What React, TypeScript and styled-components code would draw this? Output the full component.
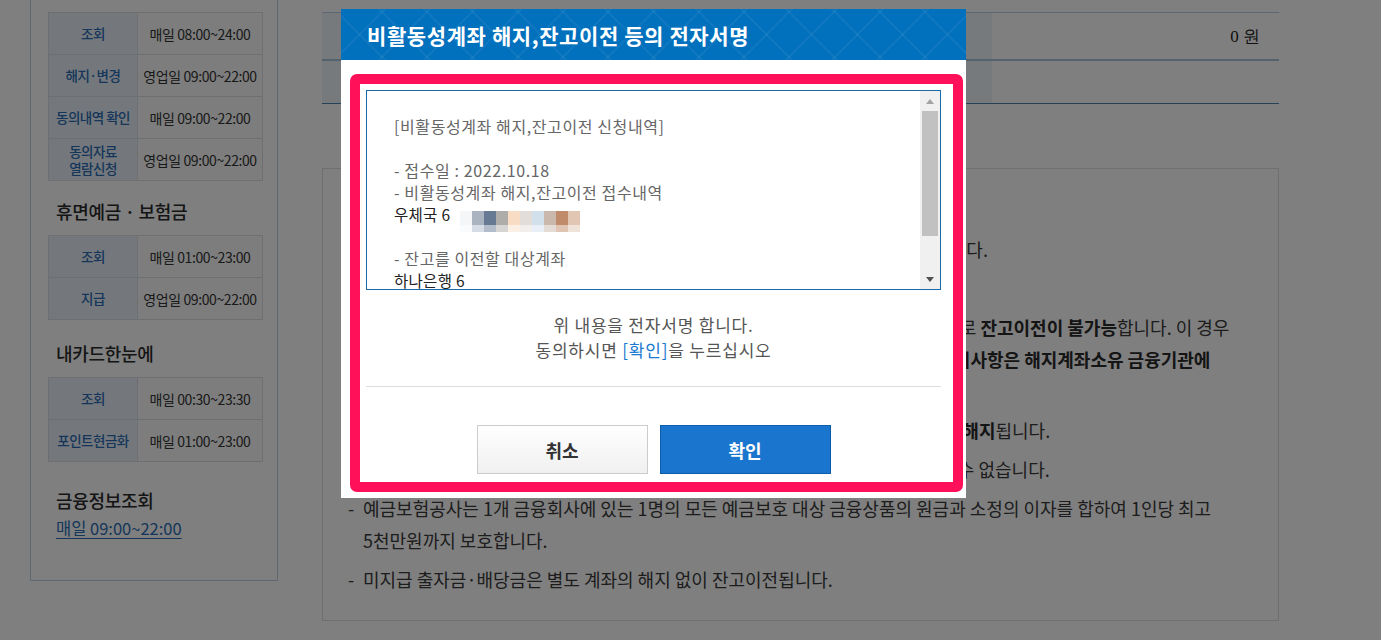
import React from "react";
import styled, { createGlobalStyle } from "styled-components";

const GlobalStyle = createGlobalStyle`
  html, body { margin: 0; padding: 0; background: #fff; }
  body {
    font-family: "Noto Sans CJK KR", "Noto Sans", sans-serif;
    color: #333;
    overflow: hidden;
  }
  * { box-sizing: border-box; }
`;

const Page = styled.div`
  display: flex;
  align-items: flex-start;
  gap: 44px;
  padding-left: 30px;
  width: 1381px;
  height: 640px;
  overflow: hidden;
`;

/* ---------- Sidebar ---------- */
const Sidebar = styled.aside`
  width: 248px;
  flex: none;
  margin-top: -20px;
  padding: 31px 14px 40px 17px;
  border: 1px solid #bfd0e2;
`;

const TimeTable = styled.table`
  width: 215px;
  border-collapse: collapse;
  table-layout: fixed;
`;

const LabelCell = styled.th`
  width: 89px;
  height: 42px;
  padding: 0 1px;
  border: 1px solid #dcdfe3;
  background: #e8f0f8;
  color: #2a6cb4;
  font-size: 13.5px;
  letter-spacing: -0.5px;
  font-weight: 500;
  line-height: 17px;
  text-align: center;
`;

const ValueCell = styled.td`
  height: 42px;
  border: 1px solid #dcdfe3;
  background: #fbfbfb;
  color: #333;
  text-align: center;
  font-size: 14px;
  letter-spacing: -0.4px;
`;

const SideHeading = styled.h3<{ $top?: number; $bottom?: number }>`
  margin: ${(p) => p.$top ?? 18}px 0 ${(p) => p.$bottom ?? 12}px 8px;
  font-size: 18px;
  line-height: 24px;
  font-weight: 500;
  color: #2b2b2b;
  letter-spacing: -0.3px;
`;

const SideLink = styled.a`
  display: block;
  margin: 4px 0 0 8px;
  width: max-content;
  font-size: 16.5px;
  line-height: 24px;
  color: #2a6cb4;
  text-decoration: underline;
  text-underline-offset: 3px;
`;

/* ---------- Content ---------- */
const Content = styled.main`
  width: 957px;
  flex: none;
  padding-top: 12px;
`;

const Summary = styled.div`
  border-top: 1px solid #b9d3ea;
  border-bottom: 1px solid #4a86b0;
`;

const SummaryRow = styled.div<{ $h: number }>`
  display: grid;
  grid-template-columns: 670px 1fr;
  height: ${(p) => p.$h}px;
  & + & { border-top: 2px solid #a9c4de; }
`;

const SummaryLabel = styled.div`
  background: #eef4fa;
`;

const SummaryValue = styled.div`
  display: flex;
  align-items: center;
  justify-content: flex-end;
  padding-right: 19px;
  font-family: "Liberation Serif", "DejaVu Serif", serif;
  font-size: 17px;
  color: #222;
`;

const NoticeBox = styled.section`
  margin-top: 64px;
  height: 453px;
  border: 1px solid #dedede;
  padding: 25px 20px 0 25px;
  display: flex;
  flex-direction: column;
  gap: 7px;
  font-size: 18px;
  line-height: 32px;
  color: #3a3a3a;
`;

const Para = styled.div`
  display: flex;
`;

const Dash = styled.span`
  width: 15px;
  flex: none;
`;

const Lines = styled.div`
  white-space: nowrap;
  & > span { display: block; }
  b { font-weight: 700; color: #2a2a2a; }
`;

/* ---------- Modal ---------- */
const Overlay = styled.div`
  position: fixed;
  inset: 0;
  background: rgba(0, 0, 0, 0.5);
`;

const Modal = styled.div`
  position: fixed;
  left: 341px;
  top: 9px;
  width: 625px;
  background: #fff;
`;

const ModalHeader = styled.div`
  height: 51px;
  display: flex;
  align-items: center;
  padding-left: 26px;
  color: #fff;
  font-size: 21px;
  font-weight: 700;
  letter-spacing: 0.6px;
  background-color: #0170bd;
  background-image:
    repeating-linear-gradient(45deg, transparent 0 30px, rgba(255,255,255,0.05) 30px 32px),
    repeating-linear-gradient(-45deg, transparent 0 30px, rgba(255,255,255,0.05) 30px 32px);
`;

const ModalBody = styled.div`
  padding: 30px 25px 24px;
`;

const Highlight = styled.div`
  position: absolute;
  left: 9px;
  top: 65px;
  width: 613px;
  height: 418px;
  border: 10px solid #ff1058;
  border-radius: 7px;
  pointer-events: none;
`;

const TextArea = styled.div`
  height: 200px;
  border: 1px solid #1a6aaa;
  display: flex;
`;

const TextContent = styled.div`
  flex: 1;
  overflow: hidden;
  padding: 24px 0 0 27px;
  line-height: 22px;
  white-space: nowrap;
`;

const TextLine = styled.div<{ $strong?: boolean }>`
  height: 22px;
  display: flex;
  align-items: center;
  color: ${(p) => (p.$strong ? "#222" : "#666")};
  font-size: ${(p) => (p.$strong ? "15.5px" : "16px")};
  letter-spacing: ${(p) => (p.$strong ? "0.3px" : "0.6px")};
`;

const Masked = styled.span`
  display: inline-grid;
  grid-template-columns: repeat(10, 12px);
  grid-template-rows: 14px 7px;
  margin: 14px 0 0 10px;
`;

const Pixel = styled.span<{ $c: string }>`
  background: ${(p) => p.$c};
`;

const ScrollBar = styled.div`
  width: 20px;
  flex: none;
  background: #f0f0f0;
  display: flex;
  flex-direction: column;
`;

const Arrow = styled.div<{ $down?: boolean }>`
  height: 20px;
  display: flex;
  align-items: center;
  justify-content: center;
  &::before {
    content: "";
    border-left: 4px solid transparent;
    border-right: 4px solid transparent;
    ${(p) =>
      p.$down
        ? "border-top: 5px solid #505050;"
        : "border-bottom: 5px solid #a3a3a3;"}
  }
`;

const Track = styled.div`
  flex: 1;
  padding: 0 2px;
`;

const Thumb = styled.div`
  height: 125px;
  background: #c1c1c1;
`;

const Message = styled.p`
  margin: 22px 0 0;
  text-align: center;
  font-size: 17px;
  line-height: 25px;
  color: #555;
  letter-spacing: 0.8px;
  em { font-style: normal; color: #1a7ad0; }
`;

const Divider = styled.hr`
  margin: 24px 0 0;
  border: 0;
  border-top: 1px solid #dcdcdc;
`;

const Buttons = styled.div`
  margin-top: 38px;
  display: flex;
  justify-content: center;
  gap: 12px;
`;

const Button = styled.button<{ $primary?: boolean }>`
  width: 171px;
  height: 49px;
  font-family: inherit;
  font-size: 18px;
  font-weight: 700;
  cursor: pointer;
  border: 1px solid ${(p) => (p.$primary ? "#0d5ea8" : "#cccccc")};
  color: ${(p) => (p.$primary ? "#fff" : "#333")};
  background: ${(p) =>
    p.$primary ? "#1a75cf" : "linear-gradient(#ffffff, #f0f0f0)"};
`;

const rows1 = [
  ["조회", "매일 08:00~24:00"],
  ["해지·변경", "영업일 09:00~22:00"],
  ["동의내역 확인", "매일 09:00~22:00"],
  ["동의자료\n열람신청", "영업일 09:00~22:00"],
];
const rows2 = [
  ["조회", "매일 01:00~23:00"],
  ["지급", "영업일 09:00~22:00"],
];
const rows3 = [
  ["조회", "매일 00:30~23:30"],
  ["포인트현금화", "매일 01:00~23:00"],
];

const pixelRows = [
  ["#f5f6f8", "#a9b4c0", "#677a93", "#aeadaa", "#f8dcc4", "#e2ddd8", "#d2e0ec", "#c9b8ab", "#c08b6a", "#e0c6b3"],
  ["#fafbfc", "#d6dce5", "#b2bccb", "#d6d5d3", "#fcefe3", "#f1eeeb", "#e8eff6", "#e4dbd4", "#e0c5b4", "#efe2d8"],
];

function Table({ rows }: { rows: string[][] }) {
  return (
    <TimeTable>
      <tbody>
        {rows.map(([l, v]) => (
          <tr key={l}>
            <LabelCell>
              {l.split("\n").map((s, i) => (
                <React.Fragment key={i}>
                  {i > 0 && <br />}
                  {s}
                </React.Fragment>
              ))}
            </LabelCell>
            <ValueCell>{v}</ValueCell>
          </tr>
        ))}
      </tbody>
    </TimeTable>
  );
}

export default function App() {
  return (
    <>
      <GlobalStyle />
      <Page>
        <Sidebar>
          <Table rows={rows1} />
          <SideHeading>휴면예금 · 보험금</SideHeading>
          <Table rows={rows2} />
          <SideHeading $top={21}>내카드한눈에</SideHeading>
          <Table rows={rows3} />
          <SideHeading $top={26} $bottom={0}>금융정보조회</SideHeading>
          <SideLink>매일 09:00~22:00</SideLink>
        </Sidebar>

        <Content>
          <Summary>
            <SummaryRow $h={46}>
              <SummaryLabel />
              <SummaryValue>0 원</SummaryValue>
            </SummaryRow>
            <SummaryRow $h={44}>
              <SummaryLabel />
              <SummaryValue />
            </SummaryRow>
          </Summary>

          <NoticeBox>
            <Para>
              <Dash>-</Dash>
              <Lines><span>비활동성계좌 해지 및 잔고이전 신청은 본인만 가능합니다.</span></Lines>
            </Para>
            <Para>
              <Dash>-</Dash>
              <Lines><span>잔고이전 대상계좌는 본인 명의의 입출금이 자유로운 예금 계좌만 지정할 수 있습니다.</span></Lines>
            </Para>
            <Para>
              <Dash>-</Dash>
              <Lines><span>해지 신청 전 계좌의 잔액과 거래내역을 반드시 확인하시기 바랍니다.</span></Lines>
            </Para>
            <Para>
              <Dash>-</Dash>
              <Lines>
                <span>압류, 질권설정, 지급제한 사유가 있는 계좌는 해지 및 잔고이전 대상에서 제외되므로 <b>잔고이전이 불가능</b>합니다. 이 경우</span>
                <span>계좌 해지 및 잔고이전은 해당 금융기관 영업점을 통하여 처리하셔야 하며 기타 <b>문의사항은 해지계좌소유 금융기관에</b></span>
                <span>문의하시기 바랍니다.</span>
              </Lines>
            </Para>
            <Para>
              <Dash>-</Dash>
              <Lines><span>잔고이전을 신청하신 비활동성계좌는 모두 잔고이전 처리와 동시에 자동으로 일괄 <b>해지</b>됩니다.</span></Lines>
            </Para>
            <Para>
              <Dash>-</Dash>
              <Lines><span>해지된 계좌 및 잔고이전 된 금액은 고객의 요청에 의해서도 다시 원상태로 되돌릴 수 없습니다.</span></Lines>
            </Para>
            <Para>
              <Dash>-</Dash>
              <Lines>
                <span>예금보험공사는 1개 금융회사에 있는 1명의 모든 예금보호 대상 금융상품의 원금과 소정의 이자를 합하여 1인당 최고</span>
                <span>5천만원까지 보호합니다.</span>
              </Lines>
            </Para>
            <Para>
              <Dash>-</Dash>
              <Lines><span>미지급 출자금·배당금은 별도 계좌의 해지 없이 잔고이전됩니다.</span></Lines>
            </Para>
          </NoticeBox>
        </Content>
      </Page>

      <Overlay />
      <Modal>
        <ModalHeader>비활동성계좌 해지,잔고이전 등의 전자서명</ModalHeader>
        <ModalBody>
          <TextArea>
            <TextContent>
              <TextLine>[비활동성계좌 해지,잔고이전 신청내역]</TextLine>
              <TextLine />
              <TextLine>- 접수일 : 2022.10.18</TextLine>
              <TextLine>- 비활동성계좌 해지,잔고이전 접수내역</TextLine>
              <TextLine $strong>
                우체국 6
                <Masked>
                  {pixelRows.flatMap((r, ri) =>
                    r.map((c, ci) => <Pixel key={`${ri}-${ci}`} $c={c} />)
                  )}
                </Masked>
              </TextLine>
              <TextLine />
              <TextLine>- 잔고를 이전할 대상계좌</TextLine>
              <TextLine $strong>하나은행 6</TextLine>
            </TextContent>
            <ScrollBar>
              <Arrow />
              <Track>
                <Thumb />
              </Track>
              <Arrow $down />
            </ScrollBar>
          </TextArea>
          <Message>
            위 내용을 전자서명 합니다.
            <br />
            동의하시면 <em>[확인]</em>을 누르십시오
          </Message>
          <Divider />
          <Buttons>
            <Button>취소</Button>
            <Button $primary>확인</Button>
          </Buttons>
        </ModalBody>
        <Highlight />
      </Modal>
    </>
  );
}
